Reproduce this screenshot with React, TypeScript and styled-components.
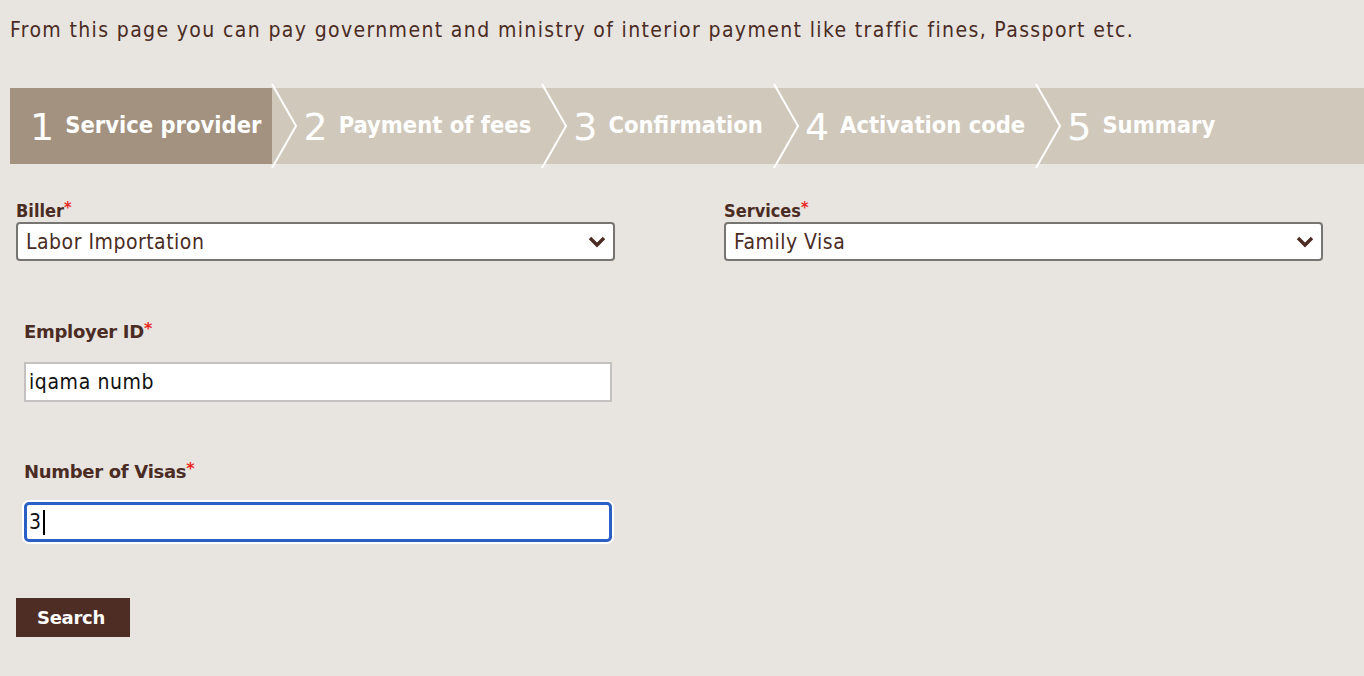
import React from 'react';
import styled, { createGlobalStyle } from 'styled-components';

const GlobalStyle = createGlobalStyle`
  html, body {
    margin: 0;
    padding: 0;
    background-color: #e8e4df;
  }
  body {
    font-family: "DejaVu Sans Condensed", "DejaVu Sans", sans-serif;
    color: #4a2c24;
  }
`;

const Page = styled.div`
  width: 1364px;
  height: 676px;
  overflow: hidden;
  padding-top: 15px;
  box-sizing: border-box;
`;

const Intro = styled.p`
  margin: 0 0 0 10px;
  font-size: 21px;
  letter-spacing: 1.37px;
  line-height: 30px;
  color: #4a2c24;
`;

const StepBar = styled.div`
  display: flex;
  align-items: stretch;
  height: 76px;
  margin: 43px 0 0 10px;
  background-color: #d1c8bc;
`;

const Step = styled.div<{ $active?: boolean; $first?: boolean }>`
  display: flex;
  align-items: center;
  gap: 11px;
  padding: 0 11px 0 ${(p) => (p.$first ? '20px' : '6px')};
  background-color: ${(p) => (p.$active ? '#a39280' : 'transparent')};
  color: #fff;
`;

const StepNumber = styled.span`
  font-family: "DejaVu Sans", sans-serif;
  font-size: 38px;
  font-weight: 400;
  line-height: 1;
  margin-top: 2px;
`;

const StepLabel = styled.span`
  font-size: 23.5px;
  font-weight: 700;
  line-height: 1;
`;

const Separator = styled.svg`
  width: 25px;
  height: 76px;
  flex: none;
  overflow: visible;
`;

const FormGrid = styled.div`
  display: grid;
  grid-template-columns: 600px 600px;
  column-gap: 108px;
  padding: 36px 0 0 16px;
`;

const Field = styled.div`
  display: flex;
  flex-direction: column;
`;

const Label = styled.label<{ $strong?: boolean }>`
  font-family: ${(p) =>
    p.$strong ? '"DejaVu Sans", sans-serif' : '"DejaVu Sans Condensed", "DejaVu Sans", sans-serif'};
  font-size: 18px;
  font-weight: 700;
  line-height: 22px;
  letter-spacing: ${(p) => (p.$strong ? '-0.3px' : '0')};
  color: #4a2c24;
`;

const Star = styled.span`
  color: #e8281e;
  font-size: 16px;
  vertical-align: top;
  line-height: 16px;
  letter-spacing: 0;
`;

const SelectBox = styled.div`
  display: flex;
  align-items: center;
  justify-content: space-between;
  width: 599px;
  height: 39px;
  box-sizing: border-box;
  padding: 0 6px 0 8px;
  background: #fff;
  border: 2px solid #777572;
  border-radius: 4px;
  font-size: 21px;
  letter-spacing: 0.5px;
  color: #4a2c24;
`;

const Stack = styled.div`
  display: flex;
  flex-direction: column;
  padding: 60px 0 0 24px;
`;

const TextField = styled.div<{ $focused?: boolean }>`
  display: flex;
  align-items: center;
  width: 588px;
  height: 40px;
  box-sizing: border-box;
  margin: 19px 0 0;
  padding: 0 ${(p) => (p.$focused ? '2px' : '3px')};
  background: #fff;
  border: ${(p) => (p.$focused ? '3px solid #2a5fc4' : '2px solid #c4c2c0')};
  border-radius: ${(p) => (p.$focused ? '5px' : '0')};
  box-shadow: ${(p) => (p.$focused ? '0 0 0 2px #fff' : 'none')};
  font-family: "DejaVu Sans Condensed", "DejaVu Sans", sans-serif;
  font-size: 21px;
  letter-spacing: 0.6px;
  color: #111;
`;

const Caret = styled.span`
  display: inline-block;
  width: 2px;
  height: 25px;
  margin-left: 1px;
  background: #000;
`;

const FieldGap = styled.div`
  height: 59px;
`;

const SearchButton = styled.button`
  align-self: flex-start;
  margin: 56px 0 0 16px;
  width: 114px;
  height: 39px;
  border: none;
  background: #4e2e24;
  color: #fff;
  font-family: "DejaVu Sans", sans-serif;
  font-size: 18px;
  font-weight: 700;
  letter-spacing: -0.3px;
  padding: 0 4px 0 0;
`;

const Chevron = () => (
  <svg width="20" height="20" viewBox="0 0 20 20">
    <polyline points="3,6 10,13 17,6" fill="none" stroke="#4a2c24" strokeWidth="3.4" />
  </svg>
);

const steps = ['Service provider', 'Payment of fees', 'Confirmation', 'Activation code', 'Summary'];

const App: React.FC = () => {
  return (
    <Page>
      <GlobalStyle />
      <Intro>
        From this page you can pay government and ministry of interior payment like traffic fines, Passport etc.
      </Intro>
      <StepBar>
        {steps.map((label, i) => (
          <React.Fragment key={label}>
            {i > 0 && (
              <Separator viewBox="0 0 25 76">
                <polyline points="0,-4 24,38 0,80" fill="none" stroke="#fff" strokeWidth="2" />
              </Separator>
            )}
            <Step $active={i === 0} $first={i === 0}>
              <StepNumber>{i + 1}</StepNumber>
              <StepLabel>{label}</StepLabel>
            </Step>
          </React.Fragment>
        ))}
      </StepBar>
      <FormGrid>
        <Field>
          <Label>
            Biller<Star>*</Star>
          </Label>
          <SelectBox>
            <span>Labor Importation</span>
            <Chevron />
          </SelectBox>
        </Field>
        <Field>
          <Label>
            Services<Star>*</Star>
          </Label>
          <SelectBox>
            <span>Family Visa</span>
            <Chevron />
          </SelectBox>
        </Field>
      </FormGrid>
      <Stack>
        <Label $strong>
          Employer ID<Star>*</Star>
        </Label>
        <TextField>iqama numb</TextField>
        <FieldGap />
        <Label $strong>
          Number of Visas<Star>*</Star>
        </Label>
        <TextField $focused>
          3<Caret />
        </TextField>
      </Stack>
      <SearchButton>Search</SearchButton>
    </Page>
  );
};

export default App;
